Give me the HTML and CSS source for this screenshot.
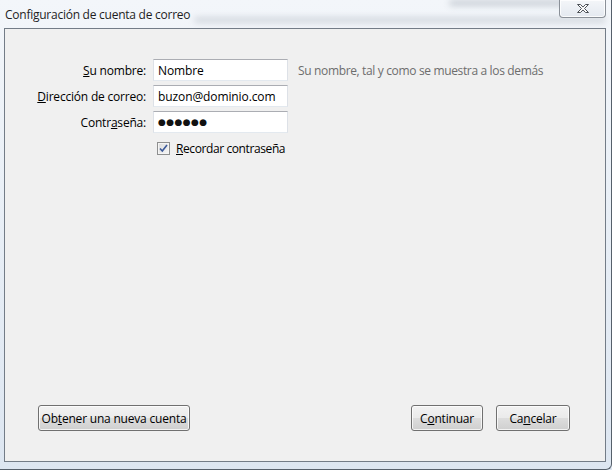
FILE: index.html
```html
<!DOCTYPE html>
<html lang="es">
<head>
	<meta charset="UTF-8">
	<meta name="viewport" content="width=device-width, initial-scale=1.0">
	<link rel="stylesheet" href="styles.css">
	<title>Configuración de cuenta de correo</title>
</head>
<body>
	<div class="window">
		<div class="titlebar">
			<span class="smudge smudge-top"></span>
			<span class="smudge smudge-mid"></span>
			<span class="title">Configuración de cuenta de correo</span>
			<button class="close" aria-label="Cerrar">
				<svg width="14" height="11" viewBox="0 0 14 11">
					<path d="M1.5 1.5h3l2.5 2.6 2.5-2.6h3l-4 4 4 4h-3l-2.5-2.6-2.5 2.6h-3l4-4z" fill="#fff" stroke="#4b4f55" stroke-width="1" stroke-linejoin="round"/>
				</svg>
			</button>
		</div>
		<div class="client">
			<div class="form">
				<label class="lbl" for="name"><u>S</u>u nombre:</label>
				<input class="field" id="name" type="text" value="Nombre">
				<span class="hint">Su nombre, tal y como se muestra a los demás</span>

				<label class="lbl" for="mail"><u>D</u>irección de correo:</label>
				<input class="field" id="mail" type="text" value="buzon@dominio.com">
				<span></span>

				<label class="lbl" for="pass">Contr<u>a</u>seña:</label>
				<div class="field pass" id="pass">&#9679;&#9679;&#9679;&#9679;&#9679;&#9679;</div>
				<span></span>

				<span></span>
				<label class="check">
					<span class="box">
						<svg width="9" height="9" viewBox="0 0 9 9">
							<path d="M1 4.5l2.3 2.6L8 1" fill="none" stroke="#3d5a99" stroke-width="1.6"/>
						</svg>
					</span>
					<span><u>R</u>ecordar contraseña</span>
				</label>
				<span></span>
			</div>

			<div class="actions">
				<button class="btn btn-wide">Ob<u>t</u>ener una nueva cuenta</button>
				<div class="right-btns">
					<button class="btn btn-ok">C<u>o</u>ntinuar</button>
					<button class="btn btn-cancel">Ca<u>n</u>celar</button>
				</div>
			</div>
		</div>
	</div>
</body>
</html>
```

FILE: styles.css
```css
*{
	padding: 0;
	margin: 0;
	box-sizing: border-box;
	font-family: "Open Sans", "Noto Sans", "Liberation Sans", sans-serif;
}
body{
	width: 612px;
	height: 470px;
	overflow: hidden;
	background: #dfe7f1;
}
.window{
	width: 612px;
	height: 470px;
	display: flex;
	flex-direction: column;
	padding: 0 5px 7px 4px;
	background: linear-gradient(180deg, #f3f6fa 0%, #eaf0f7 40%, #dde6f1 100%);
	border-right: 1px solid #56606b;
	border-bottom: 1px solid #56606b;
	border-bottom-right-radius: 6px;
}
.titlebar{
	position: relative;
	height: 28px;
	display: flex;
	align-items: center;
	justify-content: space-between;
}
.title{
	position: relative;
	padding-left: 1px;
	font-size: 12px;
	color: #1e1e1e;
	letter-spacing: -0.25px;
}
.smudge{
	position: absolute;
	background: #9aa3ae;
	border-radius: 4px;
	filter: blur(3px);
	opacity: 0.45;
}
.smudge-top{
	left: 445px;
	top: 0;
	width: 150px;
	height: 6px;
}
.smudge-mid{
	left: 190px;
	top: 17px;
	width: 412px;
	height: 6px;
	opacity: 0.35;
}
.close{
	position: relative;
	align-self: flex-start;
	width: 47px;
	height: 18px;
	display: flex;
	align-items: center;
	justify-content: center;
	background: linear-gradient(180deg, #f4f6f9 0%, #e4e9f0 100%);
	border: 1px solid #8a9098;
	border-top: none;
	border-radius: 0 0 4px 4px;
	box-shadow: inset 0 0 0 1px rgba(255,255,255,0.8);
}
.client{
	flex: 1;
	display: flex;
	flex-direction: column;
	background: #f0f0f0;
	border: 1px solid #737c87;
	padding-top: 30px;
}
.form{
	display: grid;
	grid-template-columns: 141px 135px auto;
	grid-auto-rows: 22px;
	column-gap: 7px;
	row-gap: 4px;
	align-items: center;
}
.lbl{
	justify-self: end;
	font-size: 12px;
	color: #000;
	letter-spacing: -0.2px;
}
.field{
	width: 135px;
	height: 22px;
	padding: 0 4px;
	font-size: 12px;
	color: #000;
	background: #fff;
	border: 1px solid #dde1e7;
	border-top-color: #abadb3;
	border-bottom-color: #e3e9ef;
	outline: none;
	letter-spacing: -0.1px;
}
.pass{
	display: flex;
	align-items: center;
	font-family: "DejaVu Sans", sans-serif;
	font-size: 9px;
	letter-spacing: 0.4px;
	color: #111;
}
.hint{
	padding-left: 3px;
	font-size: 12px;
	color: #6d6d6d;
	letter-spacing: -0.35px;
}
.check{
	display: flex;
	align-items: center;
	gap: 6px;
	padding-left: 4px;
	font-size: 12px;
	color: #000;
	white-space: nowrap;
	letter-spacing: -0.4px;
}
.box{
	width: 13px;
	height: 13px;
	display: flex;
	align-items: center;
	justify-content: center;
	border: 1px solid #8e8f8f;
	background: linear-gradient(135deg, #dcdcdc 0%, #f6f6f6 100%);
	box-shadow: inset 0 0 0 1px #f4f4f4;
}
.actions{
	margin-top: auto;
	margin-bottom: 30px;
	padding: 0 35px 0 33px;
	display: flex;
	justify-content: space-between;
}
.right-btns{
	display: flex;
	gap: 13px;
}
.btn{
	height: 26px;
	font-size: 12px;
	color: #000;
	letter-spacing: -0.2px;
	border: 1px solid #707070;
	border-radius: 3px;
	background: linear-gradient(180deg, #f2f2f2 0%, #ebebeb 48%, #dddddd 52%, #cfcfcf 100%);
	box-shadow: inset 0 0 0 1px rgba(255,255,255,0.75);
}
.btn-wide{
	width: 152px;
}
.btn-ok{
	width: 72px;
}
.btn-cancel{
	width: 74px;
}
```
